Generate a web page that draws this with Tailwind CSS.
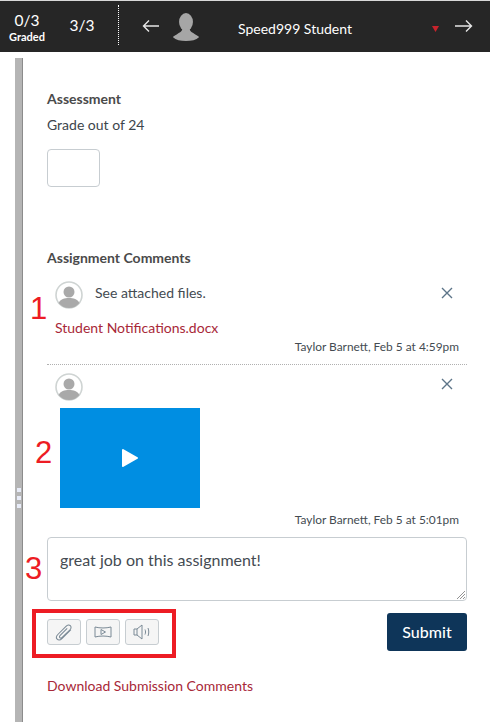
<!DOCTYPE html>
<html lang="en">
<head>
    <meta charset="UTF-8">
    <title>SpeedGrader</title>
    <script src="https://cdn.jsdelivr.net/npm/@tailwindcss/browser@4"></script>
</head>
<body class="bg-white font-['Lato','Liberation_Sans',sans-serif] text-[#2d3b45] w-[490px] h-[722px] overflow-hidden relative">
    <!-- top bar -->
    <div class="h-px bg-[#d8d8d8]"></div>
    <header class="h-[51px] bg-[#262626] text-white flex items-center">
        <div class="w-[52px] ml-[1px] text-center">
            <div class="text-[15.5px] leading-[18px] mt-[1px]">0/3</div>
            <div class="text-[11px] font-bold leading-[14px] mt-[1px]">Graded</div>
        </div>
        <div class="w-[42px] ml-[8px] text-center text-[15.5px] -mt-[1px]">3/3</div>
        <div class="ml-[15px] h-[40px] -mt-[3px] border-l border-dotted border-white"></div>
        <svg class="ml-[23px] -mt-[2px]" width="17" height="14" viewBox="0 0 17 14" fill="none" stroke="#e6e6e6" stroke-width="1.4"><path d="M17 7H1.500M7 1.500 1.500 7 7 12.500"/></svg>
        <svg class="ml-[14px]" width="26" height="28" viewBox="0 0 28 30" fill="#a6a6a6"><ellipse cx="14" cy="9.500" rx="7.500" ry="9.500"/><path d="M10 17c0 3-3 4-6 6-2 1-4 2-4 3 3 3 8 4 14 4s11-1 14-4c0-1-2-2-4-3-3-2-6-3-6-6z"/></svg>
        <div class="ml-[39px] w-[190px] text-[14px] leading-none mt-[5px]">Speed999 Student</div>
        <svg class="ml-[4px] mt-[4px]" width="7" height="6" viewBox="0 0 7 6"><path d="M0 0h7L3.500 6z" fill="#c8232c"/></svg>
        <svg class="ml-[16px] -mt-[2px]" width="18" height="14" viewBox="0 0 18 14" fill="none" stroke="#e6e6e6" stroke-width="1.4"><path d="M0 7h16.500M11 1.500 16.500 7 11 12.500"/></svg>
    </header>

    <main class="flex pl-[15px] pt-[6px] h-[670px]">
        <div class="w-[8px] bg-[#b5b5b5] border-r border-[#8c8c8c] flex flex-col items-center pt-[430px] gap-[4px] shrink-0">
            <span class="w-[4px] h-[4px] bg-[#e8ecf8]"></span>
            <span class="w-[4px] h-[4px] bg-[#e8ecf8]"></span>
            <span class="w-[4px] h-[4px] bg-[#e8ecf8]"></span>
        </div>

        <div class="flex-1 pl-[24px] pr-[23px] text-[14px]">
            <h2 class="font-bold text-[14px] leading-[16px] text-[#4a4a4a] mt-[33px]">Assessment</h2>
            <p class="text-[14px] leading-[18px] mt-[9px] text-[#3d454c]">Grade out of 24</p>
            <div class="w-[53px] h-[38px] mt-[15px] border border-[#c7cdd1] rounded-[4px]"></div>

            <h2 class="font-bold text-[14px] leading-[16px] text-[#4a4a4a] mt-[63px]">Assignment Comments</h2>

            <!-- comment 1 -->
            <div class="mt-[14px] border-b border-dotted border-[#b0b0b0] h-[85px] relative">
                <div class="flex items-center h-[28px] mt-[1px] pl-[8px] pt-[1px]">
                    <svg width="28" height="28" viewBox="0 0 28 28"><circle cx="14" cy="14" r="13" fill="#fff" stroke="#cfd4d3" stroke-width="1.600"/><circle cx="14" cy="11" r="5.500" fill="#a9a9a9"/><path d="M3.500 22c2-4 6-5 10.500-5s8.500 1 10.500 5c-2.500 3-6 5-10.500 5s-8-2-10.500-5z" fill="#a9a9a9"/></svg>
                    <span class="ml-[12px] text-[14px] text-[#444b52] -mt-[5px]">See attached files.</span>
                    <svg class="ml-auto mr-[14px] -mt-[3px]" width="12" height="12" viewBox="0 0 12 12" stroke="#5c7488" stroke-width="1.400"><path d="M1 1l10 10M11 1 1 11"/></svg>
                </div>
                <a class="block ml-[8px] mt-[11px] text-[14px] leading-[18px] text-[#a82838]">Student Notifications.docx</a>
                <p class="text-right pr-[8px] text-[11.9px] leading-[14px] mt-[3px] text-[#444b52]">Taylor Barnett, Feb 5 at 4:59pm</p>
            </div>

            <!-- comment 2 -->
            <div class="relative">
                <div class="flex items-center h-[28px] mt-[8px] pl-[8px]">
                    <svg width="28" height="28" viewBox="0 0 28 28"><circle cx="14" cy="14" r="13" fill="#fff" stroke="#cfd4d3" stroke-width="1.600"/><circle cx="14" cy="11" r="5.500" fill="#a9a9a9"/><path d="M3.500 22c2-4 6-5 10.500-5s8.500 1 10.500 5c-2.500 3-6 5-10.500 5s-8-2-10.500-5z" fill="#a9a9a9"/></svg>
                    <svg class="ml-auto mr-[14px] -mt-[7px]" width="12" height="12" viewBox="0 0 12 12" stroke="#5c7488" stroke-width="1.400"><path d="M1 1l10 10M11 1 1 11"/></svg>
                </div>
                <div class="w-[140px] h-[100px] ml-[13px] mt-[7px] bg-[#008ee2] flex items-center justify-center">
                    <svg width="18" height="20" viewBox="0 0 18 20"><path d="M2 2l14 8-14 8z" fill="#fff" stroke="#fff" stroke-width="2" stroke-linejoin="round"/></svg>
                </div>
                <p class="text-right pr-[8px] text-[11.9px] leading-[14px] mt-[5px] text-[#444b52]">Taylor Barnett, Feb 5 at 5:01pm</p>
            </div>

            <!-- reply box -->
            <div class="relative mt-[10px] h-[64px] border border-[#c7cdd1] rounded-[4px] pl-[12px] pt-[12px] text-[16px] leading-[20px] text-[#444b52]">
                great job on this assignment!
                <svg class="absolute right-[1px] bottom-[1px]" width="9" height="9" viewBox="0 0 9 9" stroke="#777" stroke-width="0.800"><path d="M1 9l8-8M4 9l5-5M7 9l2-2"/></svg>
            </div>

            <div class="flex items-start mt-[12px]">
                <div class="flex gap-[5px] mt-[6px]">
                    <button class="w-[34px] h-[26px] bg-[#f5f5f5] border border-[#c7cdd1] rounded-[3px] flex items-center justify-center">
                        <svg width="21" height="21" viewBox="0 0 18 18" fill="none" stroke="#7b8a96" stroke-width="0.900"><path d="M14.500 6.500 7 14c-1.500 1.500-3.300 1.700-4.300.7S2 12 3.500 10.500L10.500 3.500c1-1 2.500-1.300 3.500-.3s.7 2.500-.3 3.500L7 13.200c-.7.7-1.500.8-2 .3s-.4-1.300.3-2l6-6"/></svg>
                    </button>
                    <button class="w-[34px] h-[26px] bg-[#f5f5f5] border border-[#c7cdd1] rounded-[3px] flex items-center justify-center">
                        <svg width="18" height="14" viewBox="0 0 18 14" fill="none" stroke="#7b8a96" stroke-width="1"><path d="M1 2c5 1.300 11 1.300 16 0v10c-5-1.300-11-1.300-16 0z"/><path d="M7 4.500 11.500 7 7 9.500z"/></svg>
                    </button>
                    <button class="w-[34px] h-[26px] bg-[#f5f5f5] border border-[#c7cdd1] rounded-[3px] flex items-center justify-center">
                        <svg width="18" height="16" viewBox="0 0 18 16" fill="none" stroke="#7b8a96" stroke-width="1"><path d="M1 5h3v6H1zM4 5l5-4v14l-5-4"/><path d="M12 5.500c.7 1.600.7 3.400 0 5M15 4c1 2.600 1 5.400 0 8"/></svg>
                    </button>
                </div>
                <button class="ml-auto w-[80px] h-[38px] bg-[#0e3559] rounded-[3px] text-white text-[16px] font-medium">Submit</button>
            </div>

            <a class="block mt-[26px] text-[14px] leading-[18px] text-[#a82838]">Download Submission Comments</a>
        </div>
    </main>

    <!-- red annotations over the page -->
    <span class="absolute left-[30px] top-[290px] text-[31px] leading-[38px] text-[#ed1c24] font-['Liberation_Sans',sans-serif]">1</span>
    <span class="absolute left-[35px] top-[434px] text-[31px] leading-[38px] text-[#ed1c24] font-['Liberation_Sans',sans-serif]">2</span>
    <span class="absolute left-[25px] top-[550px] text-[31px] leading-[38px] text-[#ed1c24] font-['Liberation_Sans',sans-serif]">3</span>
    <div class="absolute left-[32px] top-[609px] w-[144px] h-[49px] border-[4px] border-[#ed1c24]"></div>
</body>
</html>
